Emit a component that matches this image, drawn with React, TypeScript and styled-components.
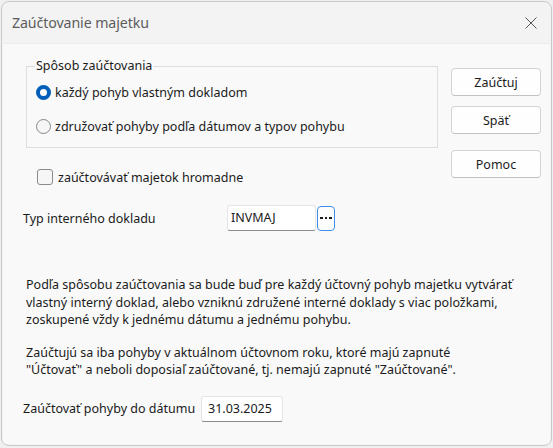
import React, {useState} from 'react';
import styled, {createGlobalStyle} from "styled-components";

const GlobalStyle = createGlobalStyle`
  html, body {
    margin: 0;
    padding: 0;
    background: #f0f0f0;
  }
  body {
    font-family: "Noto Sans", "Open Sans", sans-serif;
    font-size: 12.5px;
    color: #1b1b1b;
  }
`

const StyledWindow = styled.div`
  box-sizing: border-box;
  margin: 1px 0 0 1px;
  width: 551px;
  height: 445px;
  border: 1px solid #c9c9c9;
  border-radius: 8px;
  background: #f3f3f3;
  display: flex;
  flex-direction: column;
  overflow: hidden;
`

const StyledTitleBar = styled.div`
  height: 41px;
  flex-shrink: 0;
  display: flex;
  align-items: center;
  justify-content: space-between;
  padding: 0 14px 0 10px;
`

const StyledTitle = styled.span`
  font-size: 14.2px;
  color: #5c5c5c;
  letter-spacing: -0.1px;
`

const StyledClose = styled.button`
  border: none;
  background: transparent;
  padding: 0;
  width: 12px;
  height: 12px;
  display: flex;
  cursor: pointer;
`

const StyledBody = styled.div`
  flex: 1;
  margin: 0 1px 1px 1px;
  background: #f9f9f9;
  border-top: 1px solid #ececec;
  padding: 14px 10px 0 19px;
  display: flex;
  flex-direction: column;
`

const StyledTop = styled.div`
  display: grid;
  grid-template-columns: 416px 90px;
  column-gap: 13px;
`

const StyledGroup = styled.fieldset`
  margin: 0 0 0 4px;
  padding: 8px 0 11px 9px;
  border: 1px solid #dedede;
  border-radius: 0;
  display: flex;
  flex-direction: column;
  gap: 14px;
`

const StyledLegend = styled.legend`
  padding: 0 1px;
  margin-left: -1px;
  line-height: 16px;
`

const StyledOption = styled.label`
  display: flex;
  align-items: center;
  gap: 4px;
  height: 20px;
  cursor: pointer;
`

const StyledRadio = styled.span<{ $checked: boolean }>`
  box-sizing: border-box;
  width: 15px;
  height: 15px;
  border-radius: 50%;
  border: ${p => p.$checked ? "4.5px solid #005fb8" : "1px solid #878787"};
  background: ${p => p.$checked ? "#ffffff" : "#f6f6f6"};
  flex-shrink: 0;
`

const StyledCheckRow = styled.label`
  display: flex;
  align-items: center;
  gap: 5px;
  margin: 19px 0 0 15px;
  height: 20px;
  cursor: pointer;
`

const StyledCheckbox = styled.span`
  box-sizing: border-box;
  width: 16px;
  height: 16px;
  border-radius: 3px;
  border: 1px solid #8b8b8b;
  background: #f6f6f6;
  flex-shrink: 0;
`

const StyledButtons = styled.div`
  display: flex;
  flex-direction: column;
  padding-top: 10px;
`

const StyledButton = styled.button<{ $gap: number }>`
  box-sizing: border-box;
  height: 28px;
  margin-bottom: ${p => p.$gap}px;
  border: 1px solid #d4d4d4;
  border-bottom-color: #c2c2c2;
  border-radius: 4px;
  background: #fefefe;
  font-family: inherit;
  font-size: 12.5px;
  color: #1b1b1b;
  cursor: pointer;
`

const StyledFieldRow = styled.div<{ $top: number; $labelWidth: number }>`
  display: flex;
  align-items: center;
  margin-top: ${p => p.$top}px;
  margin-left: 1px;

  & > span:first-child {
    width: ${p => p.$labelWidth}px;
  }
`

const StyledInput = styled.input<{ $width: number }>`
  box-sizing: border-box;
  width: ${p => p.$width}px;
  height: 26px;
  border: 1px solid #e5e5e5;
  border-bottom: 1px solid #8a8a8a;
  border-radius: 3px;
  background: #ffffff;
  padding: 0 5px 1px 3px;
  font-family: inherit;
  font-size: 12.5px;
  color: #1b1b1b;
  outline: none;
`

const StyledDotsButton = styled.button`
  box-sizing: border-box;
  width: 18px;
  height: 25px;
  margin-left: 1px;
  border: 1.5px solid #3d8ee6;
  border-radius: 4px;
  background: #fdfdfd;
  padding: 0;
  display: flex;
  align-items: center;
  justify-content: center;
  gap: 2px;
  cursor: pointer;

  & > i {
    width: 2.5px;
    height: 2.5px;
    background: #1b1b1b;
  }
`

const StyledText = styled.p<{ $top: number }>`
  margin: ${p => p.$top}px 0 0 4px;
  line-height: 17.5px;
`

const App: React.FC = () => {

    const [mode, setMode] = useState<number>(0)
    const [bulk, setBulk] = useState<boolean>(false)

    return (
        <>
            <GlobalStyle/>
            <StyledWindow>
                <StyledTitleBar>
                    <StyledTitle>{"Zaúčtovanie majetku"}</StyledTitle>
                    <StyledClose aria-label={"Zavrieť"}>
                        <svg width="12" height="12" viewBox="0 0 12 12">
                            <path d="M0.5 0.5 L11.5 11.5 M11.5 0.5 L0.5 11.5" stroke="#555" strokeWidth="1"/>
                        </svg>
                    </StyledClose>
                </StyledTitleBar>
                <StyledBody>
                    <StyledTop>
                        <div>
                            <StyledGroup>
                                <StyledLegend>{"Spôsob zaúčtovania"}</StyledLegend>
                                <StyledOption onClick={() => setMode(0)}>
                                    <StyledRadio $checked={mode === 0}/>
                                    {"každý pohyb vlastným dokladom"}
                                </StyledOption>
                                <StyledOption onClick={() => setMode(1)}>
                                    <StyledRadio $checked={mode === 1}/>
                                    {"združovať pohyby podľa dátumov a typov pohybu"}
                                </StyledOption>
                            </StyledGroup>
                            <StyledCheckRow onClick={() => setBulk(!bulk)}>
                                <StyledCheckbox/>
                                {"zaúčtovávať majetok hromadne"}
                            </StyledCheckRow>
                        </div>
                        <StyledButtons>
                            <StyledButton $gap={10}>{"Zaúčtuj"}</StyledButton>
                            <StyledButton $gap={16}>{"Späť"}</StyledButton>
                            <StyledButton $gap={0}>{"Pomoc"}</StyledButton>
                        </StyledButtons>
                    </StyledTop>
                    <StyledFieldRow $top={18} $labelWidth={204}>
                        <span>{"Typ interného dokladu"}</span>
                        <StyledInput $width={89} defaultValue={"INVMAJ"}/>
                        <StyledDotsButton aria-label={"Vybrať"}><i/><i/><i/></StyledDotsButton>
                    </StyledFieldRow>
                    <StyledText $top={45}>
                        {"Podľa spôsobu zaúčtovania sa bude buď pre každý účtovný pohyb majetku vytvárať"}<br/>
                        {"vlastný interný doklad, alebo vzniknú združené interné doklady s viac položkami,"}<br/>
                        {"zoskupené vždy k jednému dátumu a jednému pohybu."}
                    </StyledText>
                    <StyledText $top={15}>
                        {"Zaúčtujú sa iba pohyby v aktuálnom účtovnom roku, ktoré majú zapnuté"}<br/>
                        {"\"Účtovať\" a neboli doposiaľ zaúčtované, tj. nemajú zapnuté \"Zaúčtované\"."}
                    </StyledText>
                    <StyledFieldRow $top={17} $labelWidth={178}>
                        <span>{"Zaúčtovať pohyby do dátumu"}</span>
                        <StyledInput $width={82} defaultValue={"31.03.2025"} style={{paddingLeft: 6}}/>
                    </StyledFieldRow>
                </StyledBody>
            </StyledWindow>
        </>
    );
};

export default App;
